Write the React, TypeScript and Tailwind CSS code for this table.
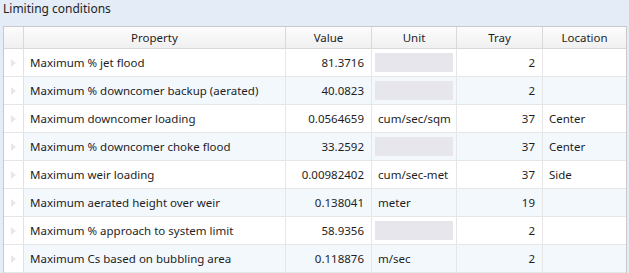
import React from 'react'

interface Row {
  property: string
  value: string
  unit: string | null
  tray: string
  location: string
}

const rows: Row[] = [
  { property: 'Maximum % jet flood', value: '81.3716', unit: null, tray: '2', location: '' },
  { property: 'Maximum % downcomer backup (aerated)', value: '40.0823', unit: null, tray: '2', location: '' },
  { property: 'Maximum downcomer loading', value: '0.0564659', unit: 'cum/sec/sqm', tray: '37', location: 'Center' },
  { property: 'Maximum % downcomer choke flood', value: '33.2592', unit: null, tray: '37', location: 'Center' },
  { property: 'Maximum weir loading', value: '0.00982402', unit: 'cum/sec-met', tray: '37', location: 'Side' },
  { property: 'Maximum aerated height over weir', value: '0.138041', unit: 'meter', tray: '19', location: '' },
  { property: 'Maximum % approach to system limit', value: '58.9356', unit: null, tray: '2', location: '' },
  { property: 'Maximum Cs based on bubbling area', value: '0.118876', unit: 'm/sec', tray: '2', location: '' },
]

const headers = ['Property', 'Value', 'Unit', 'Tray', 'Location']

export default function App() {
  return (
    <div className="w-[629px] h-[273px] overflow-hidden bg-[#e3ecf7] text-[11.5px] text-[#1e1e1e] font-['Noto_Sans',sans-serif]">
      {/* title */}
      <div className="h-[26px] px-[3px] pt-[1px] leading-[16px] text-[12px]">Limiting conditions</div>

      {/* grid */}
      <div className="ml-[3px] w-[624px] border border-[#c9c9c9] bg-white">
        <div className="grid grid-cols-[20px_262px_86px_85px_86px_83px] h-[22px] border-b border-[#d9d9d9] bg-gradient-to-b from-[#fcfcfc] to-[#f0f0f0]">
          <div className="border-r border-[#d9d9d9]" />
          {headers.map((h, i) => (
            <div
              key={h}
              className={`flex items-center justify-center leading-none ${i < headers.length - 1 ? 'border-r border-[#d9d9d9]' : ''}`}
            >
              {h}
            </div>
          ))}
        </div>

        {rows.map((r, idx) => (
          <div
            key={r.property}
            className={`grid grid-cols-[20px_262px_86px_85px_86px_83px] h-[28px] border-b border-[#e6e6e6] ${idx % 2 === 1 ? 'bg-[#f3f8fd]' : 'bg-white'}`}
          >
            <div className="flex items-center justify-center bg-white border-r border-[#e2e2e2]">
              <svg width="5" height="8" viewBox="0 0 5 8">
                <path d="M0 0 L5 4 L0 8 Z" fill="#e8e8e8" />
              </svg>
            </div>
            <div className="flex items-center pl-[6px] border-r border-[#e6e6e6] whitespace-nowrap">{r.property}</div>
            <div className="flex items-center justify-end pr-[7px] border-r border-[#e6e6e6]">{r.value}</div>
            <div className="flex items-center px-[3px] border-r border-[#e6e6e6]">
              {r.unit ? (
                <span className="pl-[3px]">{r.unit}</span>
              ) : (
                <div className="w-[78px] h-[19px] bg-[#e7e6ec]" />
              )}
            </div>
            <div className="flex items-center justify-end pr-[7px] border-r border-[#e6e6e6]">{r.tray}</div>
            <div className="flex items-center pl-[6px]">{r.location}</div>
          </div>
        ))}
      </div>
    </div>
  )
}
